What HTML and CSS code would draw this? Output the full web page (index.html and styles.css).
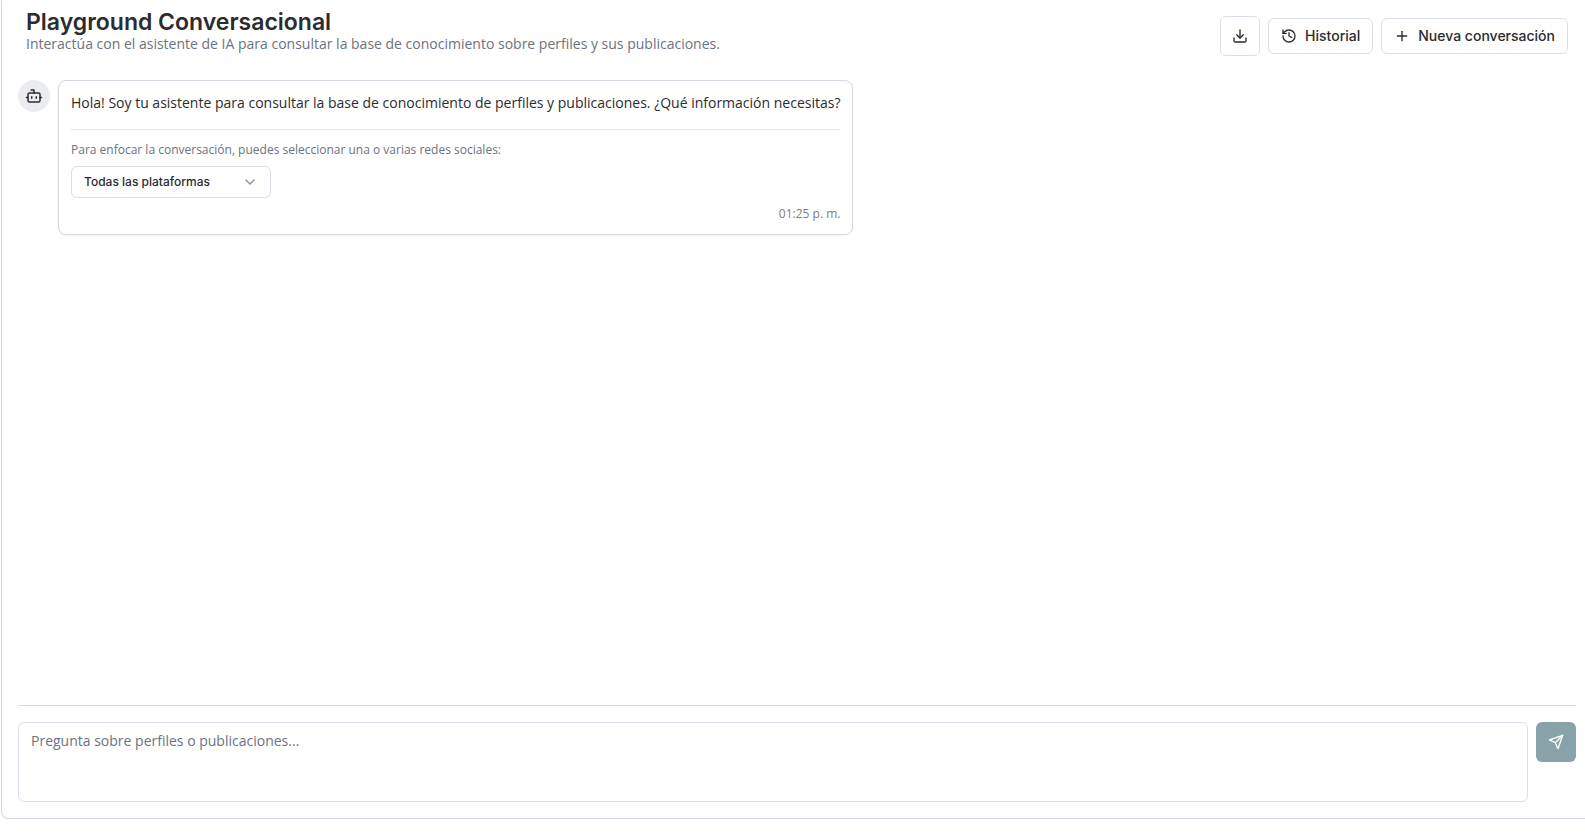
FILE: index.html
```html
<!DOCTYPE html>
<html lang="es">
<head>
    <meta charset="UTF-8">
    <meta name="viewport" content="width=device-width, initial-scale=1.0">
    <title>Playground Conversacional</title>
    <link rel="stylesheet" href="styles.css">
</head>
<body>
    <main class="panel">
        <header class="header">
            <div class="header-text">
                <h1>Playground Conversacional</h1>
                <p>Interactúa con el asistente de IA para consultar la base de conocimiento sobre perfiles y sus publicaciones.</p>
            </div>
            <div class="actions">
                <button type="button" class="button icon-button" aria-label="Descargar">
                    <svg class="icon" viewBox="0 0 24 24"><path d="M21 15v4a2 2 0 0 1-2 2H5a2 2 0 0 1-2-2v-4"/><path d="m7 10 5 5 5-5"/><path d="M12 15V3"/></svg>
                </button>
                <button type="button" class="button">
                    <svg class="icon" viewBox="0 0 24 24"><path d="M3 12a9 9 0 1 0 9-9 9.75 9.75 0 0 0-6.74 2.74L3 8"/><path d="M3 3v5h5"/><path d="M12 7v5l4 2"/></svg>
                    Historial
                </button>
                <button type="button" class="button">
                    <svg class="icon" viewBox="0 0 24 24"><path d="M5 12h14"/><path d="M12 5v14"/></svg>
                    Nueva conversación
                </button>
            </div>
        </header>

        <section class="messages">
            <div class="message">
                <div class="avatar">
                    <svg class="icon" viewBox="0 0 24 24"><path d="M12 8V4H8"/><rect width="16" height="12" x="4" y="8" rx="2"/><path d="M2 14h2"/><path d="M20 14h2"/><path d="M15 13v2"/><path d="M9 13v2"/></svg>
                </div>
                <div class="bubble">
                    <p class="bubble-text">Hola! Soy tu asistente para consultar la base de conocimiento de perfiles y publicaciones. ¿Qué información necesitas?</p>
                    <div class="platform-filter">
                        <label for="platform">Para enfocar la conversación, puedes seleccionar una o varias redes sociales:</label>
                        <div class="select-wrap">
                            <select id="platform">
                                <option>Todas las plataformas</option>
                            </select>
                            <svg class="icon chevron" viewBox="0 0 24 24"><path d="m6 9 6 6 6-6"/></svg>
                        </div>
                    </div>
                    <time class="bubble-time">01:25 p. m.</time>
                </div>
            </div>
        </section>

        <form class="composer">
            <textarea placeholder="Pregunta sobre perfiles o publicaciones..." aria-label="Mensaje"></textarea>
            <button type="submit" class="send-button" aria-label="Enviar" disabled>
                <svg class="icon" viewBox="0 0 24 24"><path d="m22 2-7 20-4-9-9-4Z"/><path d="M22 2 11 13"/></svg>
            </button>
        </form>
    </main>
</body>
</html>
```

FILE: styles.css
```css
* {
    box-sizing: border-box;
}

body {
    margin: 0;
    font-family: "Open Sans", "Liberation Sans", sans-serif;
    font-size: 14px;
    line-height: 20px;
    color: #2b2b30;
    background-color: #fff;
    overflow: hidden;
}

h1,
p {
    margin: 0;
}

button,
select,
textarea {
    font: inherit;
    color: inherit;
}

h1,
.button,
.select-wrap select {
    font-family: Inter, "Liberation Sans", sans-serif;
}

.panel {
    display: flex;
    flex-direction: column;
    height: calc(100vh - 20px);
    margin-left: 1px;
    padding: 0 9px 16px 16px;
    border: 1px solid #d5d8e1;
    border-top: none;
    border-right: none;
    border-bottom-left-radius: 8px;
    box-shadow: 0 1px 2px rgba(0, 0, 0, 0.05);
}

.header {
    display: flex;
    justify-content: space-between;
    align-items: flex-end;
    gap: 16px;
    padding: 10px 8px 24px;
}

.header-text {
    align-self: flex-start;
}

.header h1 {
    font-size: 23px;
    line-height: 24px;
    font-weight: 600;
}

.header p {
    color: #6b7280;
}

.actions {
    display: flex;
    align-items: center;
    gap: 8px;
    padding-top: 6px;
}

.button {
    display: flex;
    align-items: center;
    justify-content: center;
    gap: 8px;
    height: 36px;
    padding: 0 12px;
    border: 1px solid #dcdee8;
    border-radius: 6px;
    background-color: #fff;
    font-weight: 500;
    white-space: nowrap;
    cursor: pointer;
}

.icon-button {
    width: 40px;
    height: 40px;
    padding: 0;
}

.icon {
    width: 16px;
    height: 16px;
    flex-shrink: 0;
    fill: none;
    stroke: currentColor;
    stroke-width: 2;
    stroke-linecap: round;
    stroke-linejoin: round;
}

.messages {
    flex: 1;
    min-height: 0;
    overflow-y: auto;
}

.message {
    display: flex;
    align-items: flex-start;
    gap: 8px;
}

.avatar {
    display: flex;
    align-items: center;
    justify-content: center;
    width: 32px;
    height: 32px;
    flex-shrink: 0;
    border-radius: 50%;
    background-color: #ebecf0;
}

.avatar .icon {
    width: 18px;
    height: 18px;
}

.bubble {
    max-width: 80%;
    padding: 12px;
    border: 1px solid #d5d8e1;
    border-radius: 8px;
    box-shadow: 0 1px 2px rgba(0, 0, 0, 0.05);
}

.platform-filter {
    margin-top: 16px;
    padding-top: 12px;
    border-top: 1px solid #e4e5ea;
    font-size: 12px;
    line-height: 16px;
}

.platform-filter label {
    display: block;
    margin-bottom: 8px;
    color: #6b7280;
}

.select-wrap {
    position: relative;
    width: 200px;
}

.select-wrap select {
    display: block;
    width: 100%;
    height: 32px;
    padding: 0 32px 0 12px;
    border: 1px solid #dcdee8;
    border-radius: 6px;
    background-color: #fff;
    font-weight: 500;
    appearance: none;
}

.chevron {
    position: absolute;
    top: 8px;
    right: 13px;
    color: #8e8e93;
    pointer-events: none;
}

.bubble-time {
    display: block;
    margin-top: 8px;
    font-size: 12px;
    line-height: 16px;
    text-align: right;
    color: #7d7d80;
}

.composer {
    display: flex;
    align-items: flex-start;
    gap: 8px;
    padding-top: 16px;
    border-top: 1px solid #d5d8e1;
}

.composer textarea {
    flex: 1;
    height: 80px;
    padding: 8px 12px;
    border: 1px solid #dcdee8;
    border-radius: 6px;
    background-color: #fff;
    resize: none;
}

.composer textarea::placeholder {
    color: #6b7280;
}

.send-button {
    display: flex;
    align-items: center;
    justify-content: center;
    width: 40px;
    height: 40px;
    padding: 0;
    border: none;
    border-radius: 6px;
    background-color: #87a3a9;
    color: #fff;
}
```
